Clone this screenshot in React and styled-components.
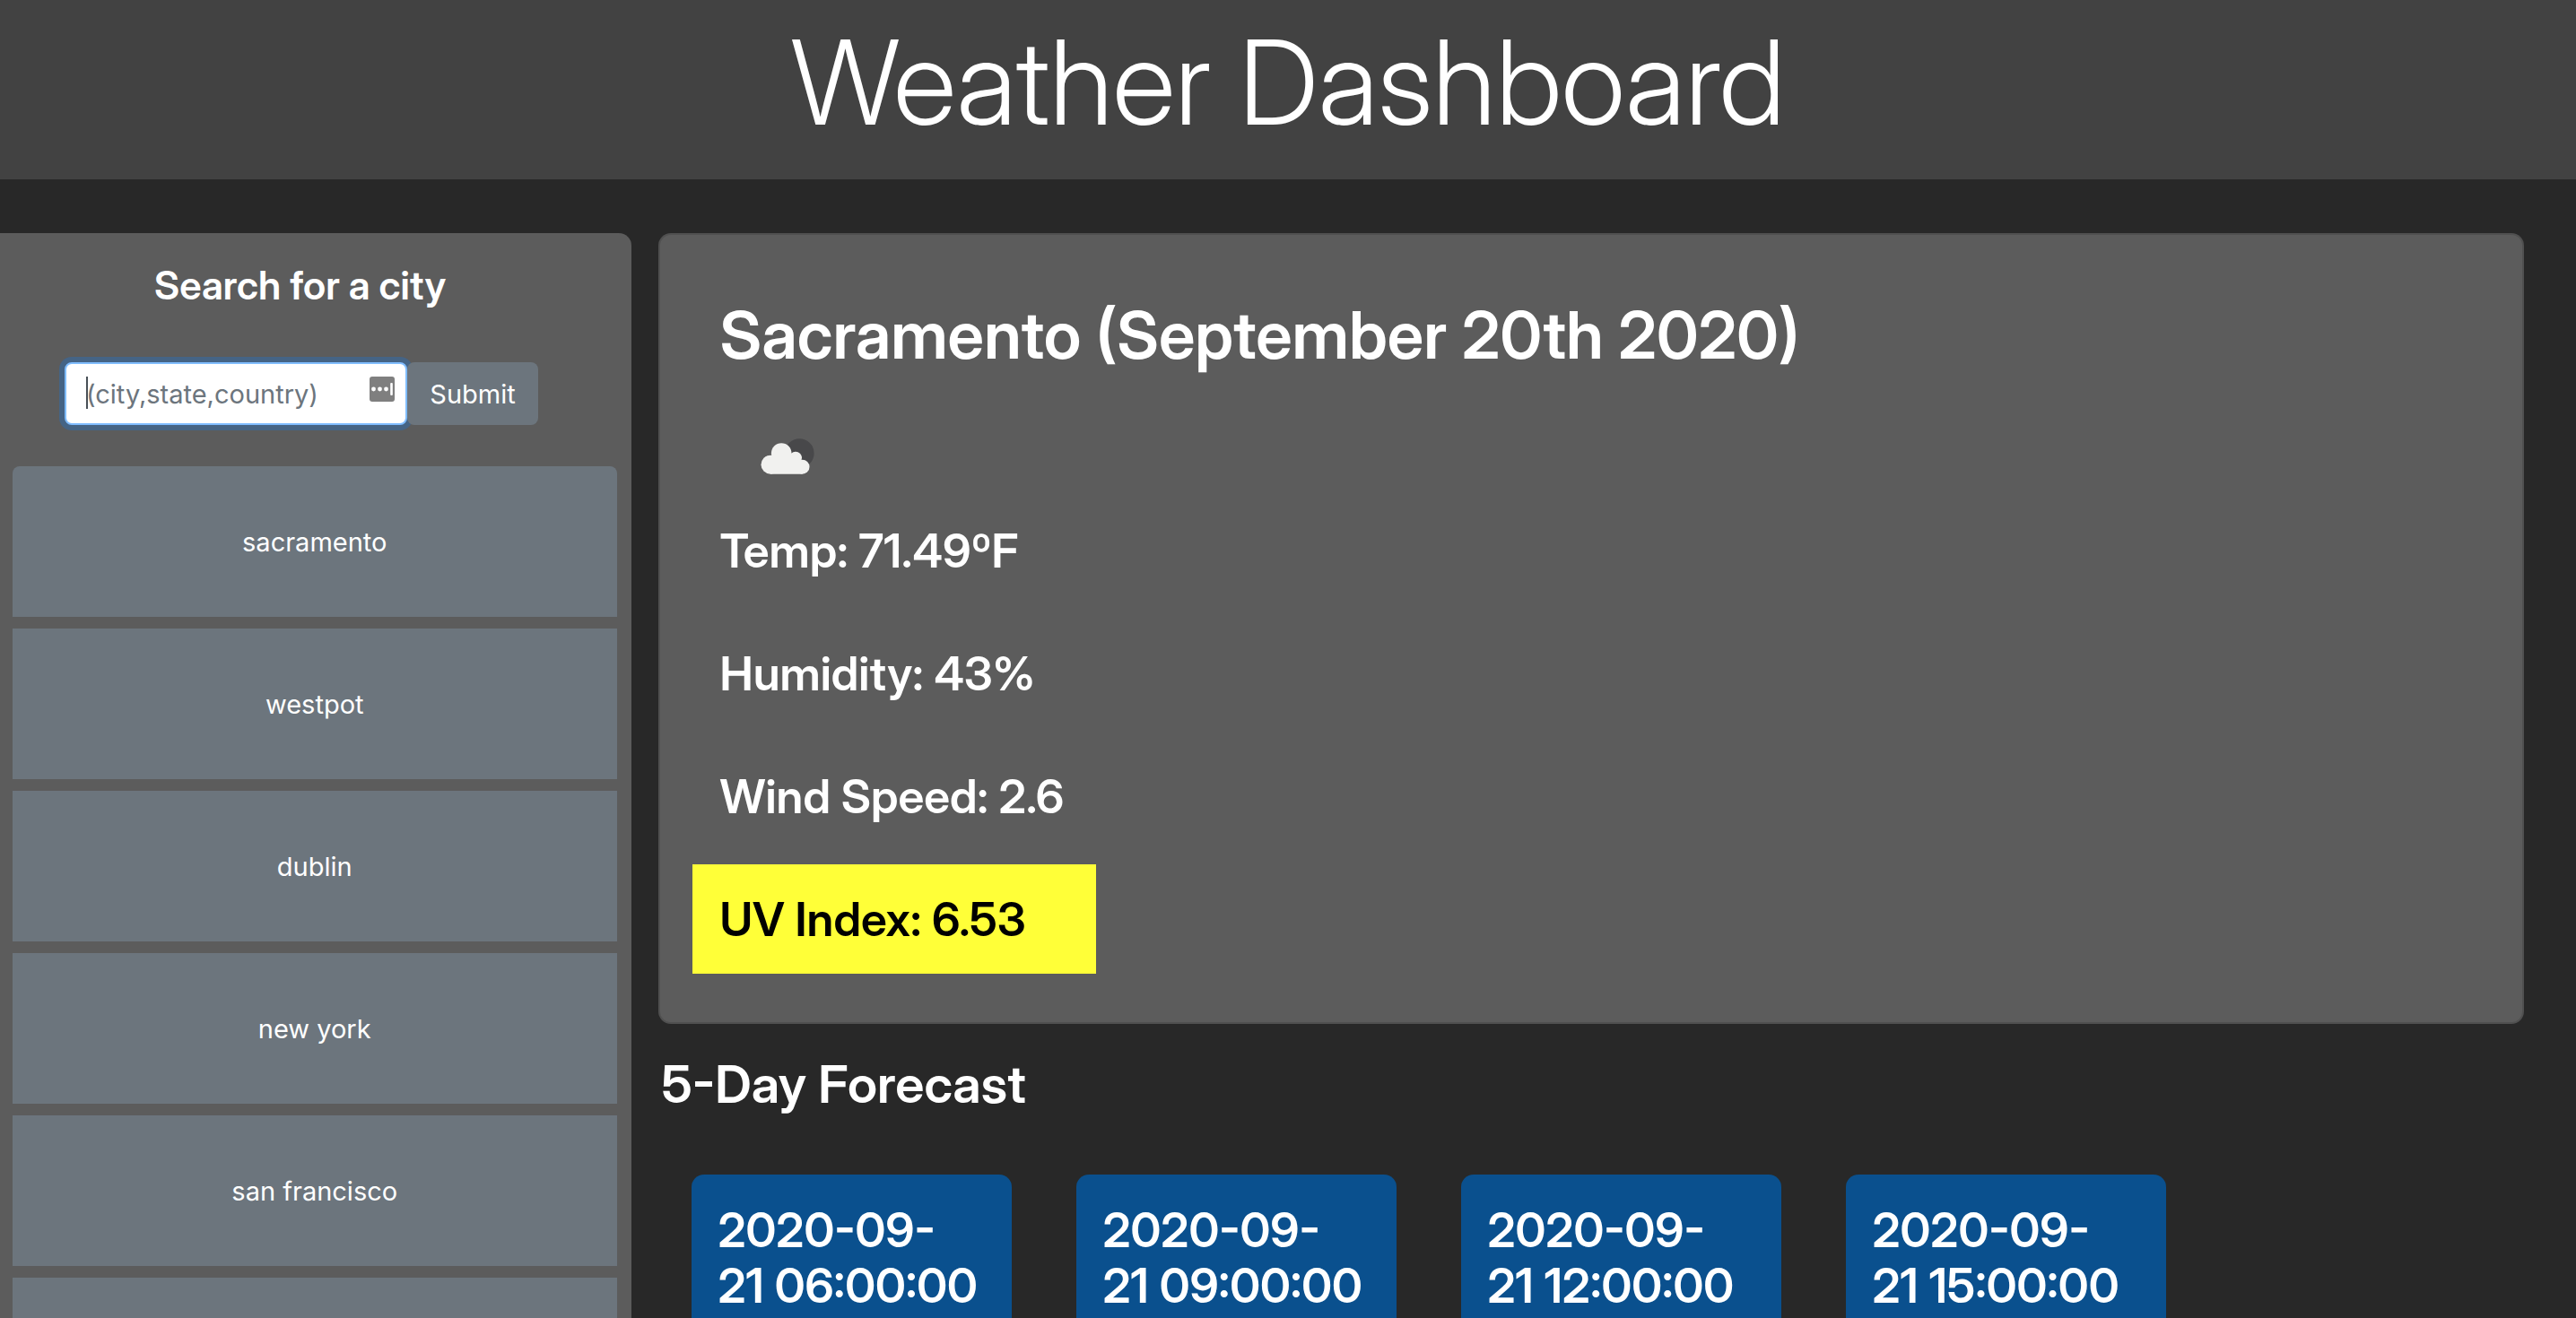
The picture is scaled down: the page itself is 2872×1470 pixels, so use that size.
import React from "react";
import styled, { createGlobalStyle } from "styled-components";

const GlobalStyle = createGlobalStyle`
  *, *::before, *::after { box-sizing: border-box; }
  body {
    margin: 0;
    background: #282828;
    color: #fff;
    font-family: Inter, "Liberation Sans", sans-serif;
    font-size: 29px;
    line-height: 1.5;
  }
  h1, h2, h3, p {
    margin: 0;
    font-family: "Inter Display", Inter, "Liberation Sans", sans-serif;
    font-weight: 600;
  }
  button, input { font: inherit; }
`;

const Page = styled.div`
  height: 100vh;
  overflow: hidden;
`;

const Header = styled.header`
  height: 200px;
  padding-top: 12px;
  background: #424242;
  text-align: center;
`;

const Title = styled.h1`
  font-size: 131px;
  font-weight: 300;
  line-height: 160px;
`;

const Columns = styled.div`
  display: flex;
  align-items: flex-start;
  gap: 30px;
  padding: 60px 58px 0 0;
`;

const Sidebar = styled.aside`
  flex: 0 0 25%;
  padding: 32px 16px 16px 14px;
  border-radius: 0 14px 14px 0;
  background: #5c5c5c;
`;

const SearchTitle = styled.h2`
  padding-right: 32px;
  font-size: 44px;
  line-height: 52px;
  text-align: center;
`;

const SearchForm = styled.form`
  display: flex;
  margin: 60px 0 46px 58px;
`;

const FieldWrap = styled.div`
  position: relative;
  width: 382px;
`;

const Field = styled.input`
  display: block;
  width: 100%;
  height: 70px;
  padding: 0 22px;
  border: 2px solid #80bdff;
  border-radius: 8px;
  outline: 0;
  box-shadow: 0 0 0 6px rgba(0, 123, 255, 0.25);
  background: #fff;
  color: #495057;
  &::placeholder { color: #6c757d; opacity: 1; }
`;

const Caret = styled.span`
  position: absolute;
  left: 24px;
  top: 16px;
  width: 2px;
  height: 36px;
  background: #495057;
`;

const FieldIcon = styled.svg`
  position: absolute;
  right: 14px;
  top: 16px;
  width: 28px;
  height: 28px;
`;

const Button = styled.button`
  padding: 2px 0 0;
  border: 0;
  border-radius: 8px;
  background: #6c757d;
  color: #fff;
  cursor: pointer;
`;

const SubmitButton = styled(Button)`
  position: relative;
  width: 146px;
  height: 70px;
`;

const CityList = styled.div`
  display: flex;
  flex-direction: column;
  gap: 13px;
`;

const CityButton = styled(Button)`
  height: 168px;
  border-radius: 0;
  &:first-child { border-radius: 8px 8px 0 0; }
`;

const Main = styled.main`
  flex: 1;
  min-width: 0;
`;

const Current = styled.section`
  display: flex;
  flex-direction: column;
  align-items: flex-start;
  gap: 15px;
  padding: 36px 36px 54px;
  border: 2px solid rgba(0, 0, 0, 0.125);
  border-radius: 14px;
  background: #5c5c5c;
`;

const CityTitle = styled.h2`
  padding: 31px 31px 29px;
  font-size: 73px;
  line-height: 90px;
`;

const WeatherIcon = styled.svg`
  display: block;
  width: 92px;
  height: 75px;
  margin-left: 58px;
`;

const Reading = styled.p`
  min-width: 450px;
  padding: 31px 31px 29px;
  background: ${(p) => (p.$alert ? "#ffff38" : "transparent")};
  color: ${(p) => (p.$alert ? "#000" : "#fff")};
  font-size: 52px;
  line-height: 62px;
`;

const ForecastTitle = styled.h2`
  padding: 31px 0 65px 4px;
  font-size: 58px;
  line-height: 72px;
`;

const Forecast = styled.section`
  display: flex;
  gap: 72px;
  padding-left: 37px;
`;

const Day = styled.article`
  flex: 0 0 357px;
  min-height: 400px;
  padding: 31px 20px 31px 30px;
  border-radius: 14px;
  background: #0a508e;
`;

const DayTitle = styled.h3`
  font-size: 53px;
  line-height: 62px;
`;

const cities = ["sacramento", "westpot", "dublin", "new york", "san francisco", ""];
const times = ["06:00:00", "09:00:00", "12:00:00", "15:00:00"];

export default function App() {
  return (
    <Page>
      <GlobalStyle />
      <Header>
        <Title>Weather Dashboard</Title>
      </Header>
      <Columns>
        <Sidebar>
          <SearchTitle>
            <label htmlFor="city">Search for a city</label>
          </SearchTitle>
          <SearchForm onSubmit={(e) => e.preventDefault()}>
            <FieldWrap>
              <Field id="city" type="text" placeholder="(city,state,country)" />
              <Caret />
              <FieldIcon viewBox="0 0 28 28" aria-hidden="true">
                <rect width="28" height="28" rx="3" fill="#7f7f7f" />
                <circle cx="4.5" cy="14" r="2.4" fill="#fff" />
                <circle cx="11.5" cy="14" r="2.4" fill="#fff" />
                <circle cx="18.5" cy="14" r="2.4" fill="#fff" />
                <rect x="23.2" y="7" width="2.6" height="14" rx="1" fill="#fff" />
              </FieldIcon>
            </FieldWrap>
            <SubmitButton type="submit">Submit</SubmitButton>
          </SearchForm>
          <CityList>
            {cities.map((city, i) => (
              <CityButton key={i} type="button">{city}</CityButton>
            ))}
          </CityList>
        </Sidebar>
        <Main>
          <Current>
            <CityTitle>Sacramento (September 20th 2020)</CityTitle>
            <WeatherIcon viewBox="0 0 92 75" role="img">
              <circle cx="61.3" cy="42.5" r="16.3" fill="#48484a" />
              <g fill="#f1f1ef">
                <circle cx="29" cy="55.2" r="10.5" />
                <circle cx="41.2" cy="42.6" r="11.3" />
                <circle cx="57" cy="47.7" r="7" />
                <circle cx="64.5" cy="57.7" r="8" />
                <path d="M29 65.7 V46 L41 40 L57 46 L64.5 55 V65.7 Z" />
              </g>
            </WeatherIcon>
            <Reading>Temp: 71.49ºF</Reading>
            <Reading>Humidity: 43%</Reading>
            <Reading>Wind Speed: 2.6</Reading>
            <Reading $alert>UV Index: 6.53</Reading>
          </Current>
          <ForecastTitle>5-Day Forecast</ForecastTitle>
          <Forecast>
            {times.map((time) => (
              <Day key={time}>
                <DayTitle>{`2020-09-21\u00a0${time}`}</DayTitle>
              </Day>
            ))}
          </Forecast>
        </Main>
      </Columns>
    </Page>
  );
}
